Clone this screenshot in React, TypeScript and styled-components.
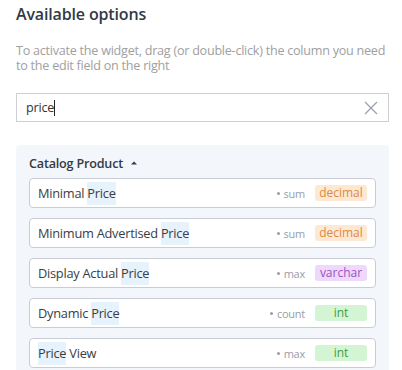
import React, { useState } from 'react'
import styled, { createGlobalStyle } from 'styled-components'

const GlobalStyle = createGlobalStyle`
  body {
    margin: 0;
    background: #ffffff;
    font-family: "Open Sans", "Noto Sans", sans-serif;
  }
`

const Wrapper = styled.div`
  width: 402px;
  height: 370px;
  overflow: hidden;
  padding: 0 13px 0 16px;
  box-sizing: border-box;
`

const Title = styled.h2`
  margin: 0;
  padding-top: 2px;
  font-size: 16px;
  line-height: 24px;
  font-weight: 600;
  color: #333a44;
  letter-spacing: -0.15px;
`

const Hint = styled.p`
  margin: 17px 0 0;
  font-size: 12.6px;
  line-height: 15px;
  letter-spacing: -0.25px;
  color: #a0a0a0;
`

const SearchBox = styled.div`
  margin-top: 20px;
  height: 29px;
  border: 1px solid #cfcfd3;
  display: flex;
  align-items: center;
  padding: 0 8px 0 9px;
  box-sizing: border-box;
`

const SearchInput = styled.div`
  flex: 1;
  font-size: 12.6px;
  letter-spacing: -0.2px;
  color: #333;
  display: flex;
  align-items: center;
`

const Caret = styled.span`
  display: inline-block;
  width: 1px;
  height: 16px;
  background: #222;
`

const ClearIcon = styled.svg`
  width: 14px;
  height: 14px;
  margin-right: 2px;
`

const Panel = styled.div`
  margin-top: 23px;
  background: #f3f6fb;
  border-radius: 4px;
  padding: 8px 13px 20px 13px;
`

const GroupHeader = styled.div`
  display: flex;
  align-items: center;
  gap: 8px;
  font-size: 12.6px;
  letter-spacing: -0.2px;
  font-weight: 600;
  color: #333a44;
  height: 20px;
  margin-bottom: 5px;
`

const List = styled.div`
  display: flex;
  flex-direction: column;
  gap: 10px;
`

const Row = styled.div`
  height: 30px;
  box-sizing: border-box;
  background: #ffffff;
  border: 1px solid #c9ccd6;
  border-radius: 4px;
  display: flex;
  align-items: center;
  padding: 0 8px 0 8px;
  font-size: 12.8px;
  letter-spacing: -0.25px;
  color: #3a3d45;
`

const Name = styled.span`
  flex: 1;
  white-space: nowrap;
`

const Mark = styled.span`
  background: #e6f2fc;
  padding: 2px 0 3px;
`

const Agg = styled.span`
  font-size: 11px;
  color: #9a9da6;
  display: flex;
  align-items: center;
  gap: 4px;
  margin-right: 10px;
  &::before {
    content: '';
    width: 3px;
    height: 3px;
    border-radius: 50%;
    background: #9a9da6;
  }
`

const badgeColors: Record<string, { bg: string; fg: string }> = {
  decimal: { bg: '#fde8d4', fg: '#e08a40' },
  varchar: { bg: '#eed9fa', fg: '#9a52c8' },
  int: { bg: '#d3f5d3', fg: '#3e9e44' },
}

const Badge = styled.span<{ kind: string }>`
  width: 52px;
  height: 16px;
  line-height: 16px;
  border-radius: 3px;
  text-align: center;
  font-size: 12px;
  letter-spacing: 0;
  background: ${({ kind }) => badgeColors[kind].bg};
  color: ${({ kind }) => badgeColors[kind].fg};
`

const columns = [
  { before: 'Minimal ', after: '', agg: 'sum', type: 'decimal' },
  { before: 'Minimum Advertised ', after: '', agg: 'sum', type: 'decimal' },
  { before: 'Display Actual ', after: '', agg: 'max', type: 'varchar' },
  { before: 'Dynamic ', after: '', agg: 'count', type: 'int' },
  { before: '', after: ' View', agg: 'max', type: 'int' },
]

export default function App() {
  const [query] = useState('price')

  return (
    <Wrapper>
      <GlobalStyle />
      <Title>Available options</Title>
      <Hint>
        To activate the widget, drag (or double-click) the column you need to the edit field on the right
      </Hint>
      <SearchBox>
        <SearchInput>
          {query}
          <Caret />
        </SearchInput>
        <ClearIcon viewBox="0 0 14 14">
          <path d="M1 1 L13 13 M13 1 L1 13" stroke="#9aa0aa" strokeWidth="1.3" fill="none" />
        </ClearIcon>
      </SearchBox>
      <Panel>
        <GroupHeader>
          Catalog Product
          <svg width="6" height="4" viewBox="0 0 6 4">
            <path d="M0 3.5 L3 0.5 L6 3.5 Z" fill="#333a44" />
          </svg>
        </GroupHeader>
        <List>
          {columns.map((c) => (
            <Row key={c.before + c.after}>
              <Name>
                {c.before}
                <Mark>Price</Mark>
                {c.after}
              </Name>
              <Agg>{c.agg}</Agg>
              <Badge kind={c.type}>{c.type}</Badge>
            </Row>
          ))}
        </List>
      </Panel>
    </Wrapper>
  )
}
